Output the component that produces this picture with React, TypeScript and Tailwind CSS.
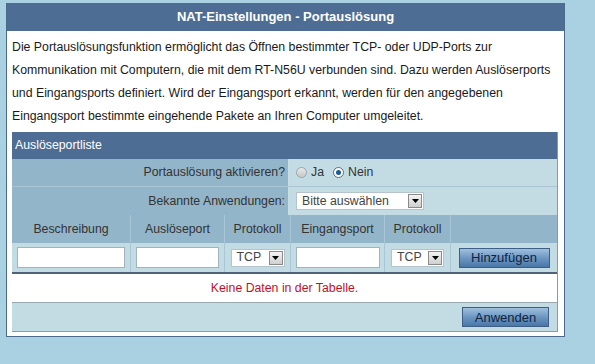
import { useState } from "react";

const font = { fontFamily: '"Liberation Sans", Arial, sans-serif' };

const Select = ({ value, width }: { value: string; width: string }) => (
  <div className={`flex items-center h-[18px] bg-white border border-[#b5c4cc] ${width}`}>
    <span className="flex-1 pl-[5px] text-[12.3px] text-[#444] leading-none">{value}</span>
    <span className="flex items-center justify-center w-[14px] h-[14px] mr-[1px] bg-gradient-to-b from-[#f4f4f4] to-[#cfcfcf] border border-[#8a8a8a]">
      <svg width="7" height="4" viewBox="0 0 7 4">
        <path d="M0 0h7L3.5 4z" fill="#000" />
      </svg>
    </span>
  </div>
);

const Button = ({ label, width }: { label: string; width: string }) => (
  <button
    className={`h-[20px] ${width} border border-[#3d5f85] bg-gradient-to-b from-[#9fc0de] via-[#6d97c2] to-[#4a77a8] text-[13px] text-[#0f2440] leading-none`}
  >
    {label}
  </button>
);

const App = () => {
  const [enabled, setEnabled] = useState(false);

  return (
    <div className="min-h-[364px] bg-[#aad1e2] pt-[3px] pl-[6px]" style={font}>
      <div className="w-[559px] bg-white border-l border-r border-b border-[#4b6a8b] pb-[4px]">
        <div className="h-[28px] bg-[#4e6d94] flex items-center justify-center text-white font-bold text-[13px]">
          NAT-Einstellungen - Portauslösung
        </div>
        <p className="px-[5px] pt-[5px] pb-[4px] text-[12.3px] leading-[23px] text-[#1a1a1a]">
          Die Portauslösungsfunktion ermöglicht das Öffnen bestimmter TCP- oder UDP-Ports zur
          <br />
          Kommunikation mit Computern, die mit dem RT-N56U verbunden sind. Dazu werden Auslöserports
          <br />
          und Eingangsports definiert. Wird der Eingangsport erkannt, werden für den angegebenen
          <br />
          Eingangsport bestimmte eingehende Pakete an Ihren Computer umgeleitet.
        </p>

        <div className="ml-[5px] w-[546px] border-r border-b border-[#8a9ba6] text-[12.3px] text-[#333]">
          <div className="h-[27px] bg-[#4e6d94] text-white flex items-center pl-[3px]">
            Auslöseportliste
          </div>

          <div className="flex h-[28px] border-b border-[#a9c4d2]">
            <div className="w-[277px] bg-[#92b5ca] flex items-center justify-end pr-[3px] border-r border-[#c9dde5]">
              Portauslösung aktivieren?
            </div>
            <div className="flex-1 bg-[#c3dce4] flex items-center pl-[7px] gap-[3px]">
              <label className="flex items-center gap-[4px]" onClick={() => setEnabled(true)}>
                <span className="w-[11px] h-[11px] rounded-full border border-[#9aa5ad] bg-gradient-to-b from-[#e8e8e8] to-[#c8c8c8] flex items-center justify-center">
                  {enabled && <span className="w-[5px] h-[5px] rounded-full bg-[#1e5f9e]" />}
                </span>
                Ja
              </label>
              <label className="flex items-center gap-[4px] ml-[6px]" onClick={() => setEnabled(false)}>
                <span className="w-[11px] h-[11px] rounded-full border border-[#4f6f8a] bg-white flex items-center justify-center">
                  {!enabled && <span className="w-[5px] h-[5px] rounded-full bg-[#1d5a92]" />}
                </span>
                Nein
              </label>
            </div>
          </div>

          <div className="flex h-[28px]">
            <div className="w-[277px] bg-[#92b5ca] flex items-center justify-end pr-[3px] border-r border-[#c9dde5]">
              Bekannte Anwendungen:
            </div>
            <div className="flex-1 bg-[#c3dce4] flex items-center pl-[7px]">
              <Select value="Bitte auswählen" width="w-[128px]" />
            </div>
          </div>

          <div className="grid grid-cols-[119px_94px_66px_94px_66px_1fr] h-[28px] bg-[#92b5ca]">
            {["Beschreibung", "Auslöseport", "Protokoll", "Eingangsport", "Protokoll", ""].map((h, i) => (
              <div
                key={i}
                className="flex items-center justify-center border-r border-[#a9c6d6] last:border-r-0"
              >
                {h}
              </div>
            ))}
          </div>

          <div className="grid grid-cols-[119px_94px_66px_94px_66px_1fr] h-[31px] bg-[#c3dce4] border-b-2 border-[#4f6278]">
            <div className="flex items-center justify-center border-r border-[#a9c6d6]">
              <div className="w-[108px] h-[21px] bg-white border border-[#a3b3bb]" />
            </div>
            <div className="flex items-center justify-center border-r border-[#a9c6d6]">
              <div className="w-[83px] h-[21px] bg-white border border-[#a3b3bb]" />
            </div>
            <div className="flex items-center justify-center border-r border-[#a9c6d6]">
              <Select value="TCP" width="w-[54px]" />
            </div>
            <div className="flex items-center justify-center border-r border-[#a9c6d6]">
              <div className="w-[84px] h-[21px] bg-white border border-[#a3b3bb]" />
            </div>
            <div className="flex items-center justify-center border-r border-[#a9c6d6]">
              <Select value="TCP" width="w-[53px]" />
            </div>
            <div className="flex items-center justify-center">
              <Button label="Hinzufügen" width="w-[91px]" />
            </div>
          </div>

          <div className="h-[29px] bg-white flex items-center justify-center text-[#c0102a] border-b border-[#9aa8b0]">
            Keine Daten in der Tabelle.
          </div>

          <div className="h-[28px] bg-[#c3dce4] flex items-center justify-end pr-[8px]">
            <Button label="Anwenden" width="w-[87px]" />
          </div>
        </div>
      </div>
    </div>
  );
};

export default App;
